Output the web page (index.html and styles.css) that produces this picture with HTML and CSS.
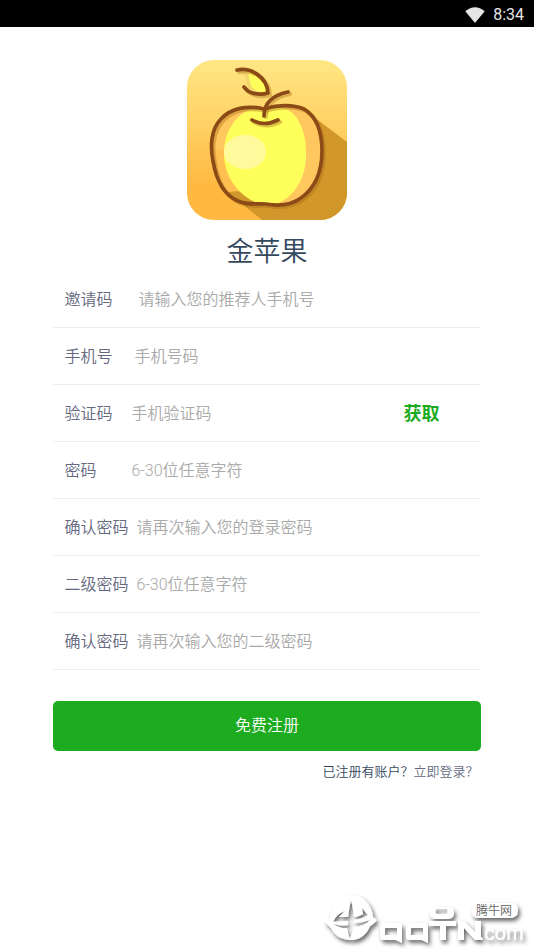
FILE: index.html
```html
<!DOCTYPE html>
<html lang="zh-CN">
<head>
<meta charset="utf-8">
<meta name="viewport" content="width=device-width, initial-scale=1">
<title>金苹果</title>
<link rel="stylesheet" href="styles.css">
</head>
<body>
<header class="status">
  <svg class="wifi" viewBox="0 0 20 16" aria-hidden="true"><path d="M0.3 4.2Q10-3.6 19.7 4.2L10 16Z" fill="#e6e6e6"/></svg>
  <span>8:34</span>
</header>
<main class="page">
  <svg class="logo" viewBox="0 0 160 160" aria-hidden="true">
    <defs>
      <linearGradient id="bg" x1="0" y1="0" x2="0" y2="1"><stop offset="0" stop-color="#ffe785"/><stop offset=".35" stop-color="#ffd469"/><stop offset=".8" stop-color="#ffb841"/><stop offset="1" stop-color="#ffb841"/></linearGradient>
      <clipPath id="tile"><rect width="160" height="160" rx="27"/></clipPath>
      <path id="apple" d="M77 49C60 45 44 48 34 59C24 69 23 86 26 101C29 119 37 135 51 141C62 146 69 143 79 144C90 146 103 146 114 138C128 128 135 111 135 91C135 72 130 57 117 49C105 44 91 45 77 49Z"/>
      <clipPath id="body"><use href="#apple"/></clipPath>
    </defs>
    <g clip-path="url(#tile)">
      <rect width="160" height="160" fill="url(#bg)"/>
      <path d="M128 58L160 82V160H75L50 140Z" fill="#d1972a"/>
      <use href="#apple" fill="#ffc85e"/>
      <g clip-path="url(#body)">
        <rect x="20" y="90" width="50" height="60" fill="#ffb94a" opacity=".6"/>
        <path d="M37 133Q48 130 58 132L80 148H46Z" fill="#d1972a"/>
        <path d="M77 48C54 46 36 68 37 96C38 118 53 137 71 143H92C110 134 120 115 119 91C119 70 109 49 94 48Z" fill="#ffff5c"/>
        <ellipse cx="58" cy="92" rx="21" ry="17" fill="#fffa9c"/>
      </g>
      <path d="M52 11Q65 12 68 30L58 28Q63 18 52 11Z" fill="#f4d66c"/>
      <path d="M62 11Q78 17 80 32Q70 33 64 26Q61 18 62 11Z" fill="#ffff5c"/>
      <g fill="none" stroke="#a96b1c" stroke-opacity=".4" stroke-width="4" stroke-linecap="round" transform="translate(2 2)">
        <use href="#apple"/>
        <path d="M50 10C64 7 80 17 81 33C71 36 61 33 57 27M77 55Q77 37 101 32M65 60Q77 67 91 60"/>
      </g>
      <g fill="none" stroke="#8a4b17" stroke-width="3.7" stroke-linecap="round" stroke-linejoin="round">
        <use href="#apple"/>
        <path d="M50 10C64 7 80 17 81 33C71 36 61 33 57 27M77 56Q77 37 101 32M65 60Q77 67 91 60"/>
      </g>
    </g>
  </svg>
  <h1 class="title">金苹果</h1>
  <form class="form">
    <div class="row gap-xl"><label for="invite">邀请码</label><input id="invite" type="text" placeholder="请输入您的推荐人手机号"></div>
    <div class="row gap-lg"><label for="phone">手机号</label><input id="phone" type="tel" placeholder="手机号码"></div>
    <div class="row gap-md"><label for="code">验证码</label><input id="code" type="text" placeholder="手机验证码"><button class="fetch" type="button">获取</button></div>
    <div class="row gap-md"><label class="short" for="pw">密码</label><input id="pw" type="password" placeholder="6-30位任意字符"></div>
    <div class="row"><label for="pw2">确认密码</label><input id="pw2" type="password" placeholder="请再次输入您的登录密码"></div>
    <div class="row"><label for="second">二级密码</label><input id="second" type="password" placeholder="6-30位任意字符"></div>
    <div class="row"><label for="second2">确认密码</label><input id="second2" type="password" placeholder="请再次输入您的二级密码"></div>
    <button class="submit" type="submit">免费注册</button>
    <p class="login">已注册有账户？<a href="#">立即登录？</a></p>
  </form>
</main>
<svg class="mark" viewBox="0 0 212 60" aria-hidden="true">
  <defs><filter id="shade" x="-10%" y="-20%" width="120%" height="150%"><feDropShadow dx="2" dy="3" stdDeviation="2" flood-color="#000" flood-opacity=".6"/></filter></defs>
  <g filter="url(#shade)" fill="#fff">
    <path fill-rule="evenodd" d="M30 6C40 6 50 15 51 28L55 31Q51 36 48 37C44 47 37 51 29 51C19 51 12 46 9 39L2 32L8 30C8 15 19 6 30 6ZM29 11Q27 20 26 28H17L23 22Q14 25 11 33Q18 32 26 32V36Q18 37 11 35Q18 40 25 39Q26 46 28 50Q30 45 32 38Q43 37 48 31Q40 34 32 34V31Q41 30 46 26L40 19L41 25Q37 28 32 28Q31 18 29 11Z"/>
    <path fill-rule="evenodd" d="M63 34H76Q80 34 80 38V54L74 51H62Q58 51 58 47V39Q58 34 63 34ZM63 39V46H75V39Z"/>
    <path fill-rule="evenodd" d="M89 34H102Q106 34 106 38V54L100 51H88Q84 51 84 47V39Q84 34 89 34ZM89 39V46H101V39Z"/>
    <path fill-rule="evenodd" d="M114 18H125Q132 18 132 24Q132 30 125 30H114Q108 30 108 24Q108 18 114 18ZM114 20Q112 25 116 25H123Q127 25 125 20Z"/>
    <path d="M107 32H134V37H124V51H118V37H107ZM136 51V32H142L153 43V32H159V51H153L142 39V51Z"/>
    <path d="M157 14H188Q196 14 196 21Q196 29 188 29H157Q149 29 150 21Q151 14 157 14Z"/>
    <text x="157" y="51" class="mark-com">.com</text>
  </g>
  <text x="154" y="26" class="mark-name">腾牛网</text>
</svg>
</body>
</html>
```
FILE: styles.css
```css
* {
  box-sizing: border-box;
}

body {
  position: relative;
  min-height: 100vh;
  margin: 0;
  background: #fff;
  color: #34495e;
  font-family: Roboto, "Noto Sans CJK SC", sans-serif;
  font-size: 16px;
  font-weight: 350;
}

button,
input {
  padding: 0;
  border: 0;
  background: none;
  font: inherit;
}

.status {
  display: flex;
  align-items: center;
  justify-content: flex-end;
  gap: 8px;
  height: 27px;
  padding: 2px 10px 0;
  background: #000;
  color: #e6e6e6;
  font-weight: 400;
}

.wifi {
  width: 20px;
  height: 16px;
}

.page {
  display: flex;
  flex-direction: column;
  align-items: center;
  padding: 33px 10% 0;
}

.logo {
  width: 160px;
  height: 160px;
}

.title {
  margin: 13px 0 0;
  font-size: 27px;
  font-weight: 350;
  line-height: 38px;
}

.form {
  width: 100%;
}

.row {
  display: flex;
  align-items: center;
  gap: 8px;
  height: 57px;
  padding: 2px 41px 0 11px;
  border-bottom: 1px solid #e9edee;
  line-height: 24px;
}

.row label {
  flex: none;
  color: #666980;
}

.row .short {
  min-width: 48px;
}

.row input {
  flex: 1;
  min-width: 0;
  height: 24px;
  outline: 0;
}

.row input::placeholder {
  color: #a9a9a9;
  line-height: 24px;
  opacity: 1;
}

.gap-md {
  gap: 19px;
}

.gap-lg {
  gap: 22px;
}

.gap-xl {
  gap: 26px;
}

.fetch {
  color: #1bab20;
  font-size: 18px;
  font-weight: 700;
  cursor: pointer;
}

.submit {
  display: block;
  width: 100%;
  height: 50px;
  margin-top: 31px;
  padding-bottom: 4px;
  border-radius: 5px;
  background: #1dab1f;
  color: #fff;
  cursor: pointer;
}

.login {
  margin: 11px 0 0;
  padding-right: 2px;
  font-size: 13px;
  line-height: 20px;
  text-align: right;
}

.login a {
  color: #666980;
  text-decoration: none;
}

.mark {
  position: absolute;
  right: 0;
  bottom: 0;
  width: 212px;
  height: 60px;
}

.mark-com {
  font-size: 20px;
  font-weight: 400;
}

.mark-name {
  fill: #666;
  font-size: 12px;
}
```
